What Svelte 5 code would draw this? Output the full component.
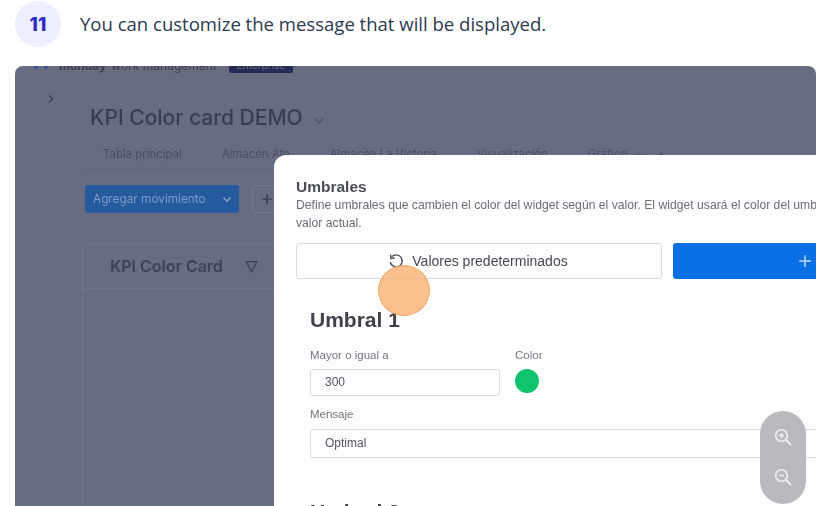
<script>
  const tabs = ["Tabla principal", "Almacén Ate", "Almacén La Victoria", "Visualización", "Gráfico"];
</script>

<main class="page">
  <header class="step">
    <span class="num">11</span>
    <p>You can customize the message that will be displayed.</p>
  </header>

  <section class="shot">
    <div class="backdrop">
      <div class="brand">
        <svg width="16" height="10" viewBox="0 0 16 10"><circle cx="3" cy="7" r="2" fill="#3d4f9e" /><circle cx="8" cy="3" r="2" fill="#3d4f9e" /><circle cx="13" cy="7" r="2" fill="#3d4f9e" /></svg>
        <b>monday</b><span>work management</span><em>Enterprise</em>
      </div>
      <div class="board">
        <svg class="expand" width="8" height="10" viewBox="0 0 8 10"><path d="M2 1.5 5.5 5 2 8.5" fill="none" stroke="#3c4055" stroke-width="1.2" /></svg>
        <h1>KPI Color card DEMO
          <svg width="12" height="8" viewBox="0 0 12 8"><path d="M1.5 1.5 6 6l4.5-4.5" fill="none" stroke="#50556c" stroke-width="1.2" /></svg>
        </h1>
        <nav>
          {#each tabs as tab}
            <span>{tab}</span>
          {/each}
          <span class="more">···</span>
          <span class="more">+</span>
        </nav>
        <div class="actions">
          <div class="add"><span>Agregar movimiento</span>
            <svg width="10" height="7" viewBox="0 0 10 7"><path d="M1.5 1.5 5 5l3.5-3.5" fill="none" stroke="#7e9cc6" stroke-width="1.6" /></svg>
          </div>
          <div class="plus">+</div>
        </div>
        <div class="widget">
          <div class="widget-head">
            <span>KPI Color Card</span>
            <svg width="13" height="13" viewBox="0 0 12 12"><path d="M1 1.5h10L6 11Z" fill="none" stroke="#3c4055" stroke-width="1.2" stroke-linejoin="round" /></svg>
          </div>
        </div>
      </div>
    </div>

    <div class="modal">
      <h2>Umbrales</h2>
      <p class="desc">Define umbrales que cambien el color del widget según el valor. El widget usará el color del umbral<br />valor actual.</p>
      <div class="buttons">
        <div class="reset">
          <svg width="16" height="16" viewBox="0 0 16 16"><path d="M4 3.6A6 6 0 1 1 2.3 9" fill="none" stroke="#4a4d58" stroke-width="1.4" /><path d="M2.6 1.8 3 5.6l3.6-.8" fill="none" stroke="#4a4d58" stroke-width="1.4" /></svg>
          <span>Valores predeterminados</span>
        </div>
        <div class="new">+</div>
      </div>
      <div class="rule">
        <h3>Umbral 1</h3>
        <div class="row">
          <label class="value"><span>Mayor o igual a</span><div class="field">300</div></label>
          <div class="color"><span>Color</span><i></i></div>
        </div>
        <label class="msg"><span>Mensaje</span><div class="field">Optimal</div></label>
        <h3 class="next">Umbral 2</h3>
      </div>
    </div>

    <div class="pointer"></div>

    <div class="zoom">
      <svg width="20" height="20" viewBox="0 0 20 20"><circle cx="8.5" cy="8.5" r="5.8" fill="none" stroke="#eef0f0" stroke-width="1.6" /><path d="m13 13 5 5" stroke="#eef0f0" stroke-width="1.8" /><path d="M6 8.5h5M8.5 6v5" stroke="#eef0f0" stroke-width="1.4" /></svg>
      <svg width="20" height="20" viewBox="0 0 20 20"><circle cx="8.5" cy="8.5" r="5.8" fill="none" stroke="#eef0f0" stroke-width="1.6" /><path d="m13 13 5 5" stroke="#eef0f0" stroke-width="1.8" /><path d="M6 8.5h5" stroke="#eef0f0" stroke-width="1.4" /></svg>
    </div>
  </section>
</main>

<style>
  :global(body) {
    margin: 0;
    background: #fff;
  }
  .page {
    width: 833px;
    height: 506px;
    overflow: hidden;
    font-family: Inter, "Liberation Sans", sans-serif;
  }
  .step {
    display: flex;
    align-items: center;
    height: 47px;
    padding: 1px 0 0 15px;
    box-sizing: border-box;
  }
  .num {
    display: flex;
    align-items: center;
    justify-content: center;
    width: 46px;
    height: 46px;
    border-radius: 50%;
    background: #edeeff;
    color: #2f2bc4;
    font-size: 19px;
    font-weight: 800;
  }
  .step p {
    margin: -2px 0 0 19px;
    color: #2d3a52;
    font-size: 18.55px;
    font-family: "Open Sans", sans-serif;
  }
  .shot {
    position: relative;
    width: 801px;
    height: 440px;
    margin: 19px 0 0 15px;
    border-radius: 8px 8px 0 0;
    overflow: hidden;
    background: #686c80;
  }
  .backdrop {
    filter: blur(0.6px);
  }
  .brand {
    display: flex;
    align-items: center;
    gap: 5px;
    height: 10px;
    margin-top: -6px;
    padding-left: 18px;
    color: #3a3e52;
    font-size: 12px;
  }
  .brand b {
    margin-left: 5px;
  }
  .brand em {
    margin-left: 7px;
    padding: 2px 8px;
    border-radius: 2px;
    background: #262b56;
    color: #686c80;
    font-style: normal;
    font-size: 10px;
  }
  .board {
    position: relative;
    padding: 33px 0 0 67px;
  }
  .expand {
    position: absolute;
    left: 32px;
    top: 24px;
  }
  h1 {
    margin: 0 0 0 8px;
    color: #393d54;
    font-size: 21px;
    font-weight: 500;
    line-height: 30px;
  }
  h1 svg {
    margin-left: 5px;
  }
  nav {
    display: flex;
    gap: 40px;
    align-items: center;
    height: 31px;
    margin: 5px 0 0 3px;
    padding-left: 18px;
    border-bottom: 1px solid #5f6377;
    color: #4a4e63;
    font-size: 11.4px;
  }
  .more {
    margin-left: -30px;
  }
  .actions {
    display: flex;
    gap: 13px;
    margin-top: 15px;
    margin-left: 3px;
  }
  .add {
    display: flex;
    align-items: center;
    justify-content: space-between;
    box-sizing: border-box;
    width: 154px;
    height: 28px;
    padding: 0 7px 0 8px;
    border-radius: 3px;
    background: #255a9f;
    color: #7e9cc6;
    font-size: 11.8px;
  }
  .plus {
    width: 30px;
    height: 28px;
    box-sizing: border-box;
    border: 1px solid #75798c;
    border-radius: 3px;
    color: #3c4055;
    font-size: 20px;
    line-height: 24px;
    text-align: center;
  }
  .widget {
    height: 300px;
    margin-top: 30px;
    border: 1px solid #71758a;
    border-radius: 6px 0 0 0;
  }
  .widget-head {
    display: flex;
    align-items: center;
    gap: 22px;
    height: 44px;
    padding-left: 27px;
    border-bottom: 1px solid #71758a;
    color: #3c4058;
    font-size: 16px;
    font-weight: 600;
  }
  .modal {
    position: absolute;
    left: 259px;
    top: 89px;
    width: 542px;
    height: 351px;
    box-sizing: border-box;
    padding: 23px 0 0 22px;
    border-radius: 12px 0 0 0;
    background: #fdfdfe;
    color: #4a4d58;
    font-family: "Liberation Sans", Arial, sans-serif;
    overflow: hidden;
    filter: blur(0.35px);
  }
  h2 {
    margin: 0;
    color: #4a4d55;
    font-size: 15.5px;
    font-weight: 700;
    line-height: 18px;
  }
  .desc {
    width: 600px;
    margin: 0;
    color: #6b6e78;
    font-size: 12.2px;
    line-height: 18px;
  }
  .buttons {
    display: flex;
    gap: 11px;
    width: 600px;
    margin-top: 11px;
  }
  .reset {
    display: flex;
    align-items: center;
    justify-content: center;
    gap: 8px;
    box-sizing: border-box;
    width: 366px;
    height: 36px;
    border: 1px solid #d8d9e2;
    border-radius: 3px;
    padding-right: 2px;
    color: #484a52;
    font-size: 14px;
  }
  .reset svg {
    flex: none;
  }
  .new {
    flex: 1;
    height: 36px;
    padding-right: 84px;
    border-radius: 3px;
    background: #0971e5;
    color: #a9cdf6;
    font-size: 24px;
    line-height: 36px;
    text-align: right;
  }
  .rule {
    padding: 25px 0 0 14px;
  }
  h3 {
    margin: 0;
    color: #3f4248;
    font-size: 21px;
    font-weight: 700;
    line-height: 32px;
  }
  .row {
    display: flex;
    gap: 15px;
    margin-top: 13px;
  }
  label, .color {
    display: block;
    font-size: 11.5px;
    color: #75777f;
  }
  .value {
    width: 190px;
  }
  .field {
    box-sizing: border-box;
    height: 27px;
    margin-top: 8px;
    padding-left: 14px;
    border: 1px solid #dadbe3;
    border-radius: 3px;
    color: #55575f;
    font-size: 12px;
    line-height: 25px;
  }
  .color i {
    display: block;
    width: 24px;
    height: 24px;
    margin-top: 8px;
    border-radius: 50%;
    background: #0fc46d;
  }
  .msg {
    margin-top: 12px;
  }
  .msg .field {
    width: 560px;
    height: 29px;
    margin-top: 9px;
    line-height: 27px;
  }
  .next {
    margin-top: 38px;
  }
  .pointer {
    position: absolute;
    left: 363px;
    top: 199px;
    width: 52px;
    height: 51px;
    box-sizing: border-box;
    border: 1px solid #f4a767;
    border-radius: 50%;
    background: rgba(251, 170, 104, 0.75);
  }
  .zoom {
    position: absolute;
    left: 745px;
    top: 345px;
    display: flex;
    flex-direction: column;
    align-items: center;
    gap: 20px;
    box-sizing: border-box;
    width: 46px;
    height: 93px;
    padding-top: 16px;
    border-radius: 23px;
    background: #b9babd;
  }
</style>
